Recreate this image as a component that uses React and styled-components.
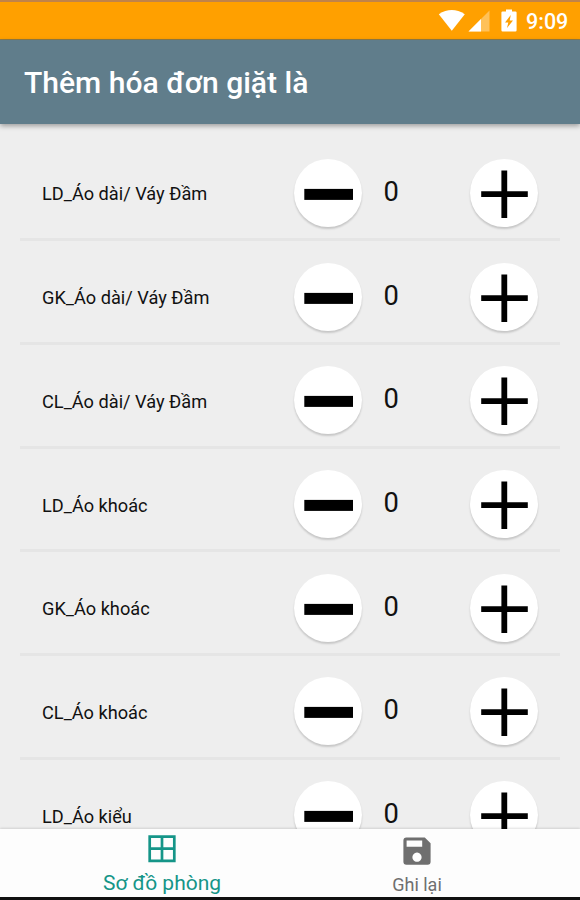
import React from 'react'
import styled, { createGlobalStyle } from 'styled-components'

const items = [
    'LD_Áo dài/ Váy Đầm',
    'GK_Áo dài/ Váy Đầm',
    'CL_Áo dài/ Váy Đầm',
    'LD_Áo khoác',
    'GK_Áo khoác',
    'CL_Áo khoác',
    'LD_Áo kiểu',
];

const MinusIcon = () => (
    <svg width="68" height="68" viewBox="0 0 68 68">
        <rect x="10.3" y="29.9" width="48.7" height="11" fill="#000" />
    </svg>
)

const PlusIcon = () => (
    <svg width="68" height="68" viewBox="0 0 68 68">
        <path d="M11.2 32.2h46.6v5.8h-46.6zM31.4 11.4h5.8v47.6h-5.8z" fill="#000" />
    </svg>
)

const ItemRow = ({ name, count }) => (
    <Row>
        <Label>{name}</Label>
        <RoundButton aria-label="-"><MinusIcon /></RoundButton>
        <Count>{count}</Count>
        <RoundButton aria-label="+"><PlusIcon /></RoundButton>
    </Row>
)

const App = () => {
    return (
        <Screen>
            <GlobalStyle />

            {/* STATUS BAR */}
            <StatusBar>
                <svg width="28" height="22" viewBox="0 0 28 22">
                    <path d="M0.8 4.2Q13.8 -4.2 26.8 4.2L13.8 20.8z" fill="#fff" />
                </svg>
                <svg width="22" height="22" viewBox="0 0 22 22">
                    <path d="M0.5 21.5L21.5 0.5v21z" fill="#fff" opacity="0.35" />
                    <path d="M0.5 21.5L13 9v12.5z" fill="#fff" />
                </svg>
                <BatteryIcon width="16" height="23" viewBox="0 0 16 23">
                    <path d="M1.6 2.4H5V0.4h6v2h3.4q1.2 0 1.2 1.2v17.6q0 1.2-1.2 1.2H1.6q-1.2 0-1.2-1.2V3.6q0-1.2 1.2-1.2z" fill="#fff" />
                    <path d="M9.8 6L4 13.4h3.3L6 19l6-7.6H8.7z" fill="#ffa000" />
                </BatteryIcon>
                <Clock>9:09</Clock>
            </StatusBar>

            {/* TITLE */}
            <Header>
                <Title>Thêm hóa đơn giặt là</Title>
            </Header>

            {/* ITEMS */}
            <List>
                {items.map((name) => (
                    <ItemRow key={name} name={name} count={0} />
                ))}
            </List>

            {/* BOTTOM NAVIGATION */}
            <BottomNav>
                <NavItem $active>
                    <svg width="28" height="28" viewBox="0 0 28 28">
                        <path d="M1.7 1.7h24.6v24.1H1.7zM14 1.7v24.1M1.7 13.7h24.6" fill="none" stroke="currentColor" strokeWidth="2.7" />
                    </svg>
                    <NavLabel $active>Sơ đồ phòng</NavLabel>
                </NavItem>
                <NavItem>
                    <svg width="28" height="28" viewBox="0 0 28 28">
                        <path
                            fillRule="evenodd"
                            d="M3.4 0.5h18.4l5.8 5.8v18.4q0 3-3 3H3.4q-3 0-3-3V3.5q0-3 3-3zM3.6 3.5v6.2h15.6V3.5zM14 15.6a4.6 4.6 0 1 0 0.01 0z"
                            fill="currentColor"
                        />
                    </svg>
                    <NavLabel>Ghi lại</NavLabel>
                </NavItem>
            </BottomNav>
        </Screen>
    )
}

const GlobalStyle = createGlobalStyle`
    body {
        margin: 0;
        font-family: Roboto, 'Liberation Sans', sans-serif;
    }

    * {
        box-sizing: border-box;
    }
`

const Screen = styled.div`
    display: flex;
    flex-direction: column;
    width: 580px;
    height: 900px;
    overflow: hidden;
    background: #eeeeee;
`

const StatusBar = styled.div`
    display: flex;
    align-items: flex-start;
    flex: none;
    height: 40px;
    padding: 8px 0 0 438px;
    border-top: 2px solid #c0834a;
    border-bottom: 1px solid #937d45;
    background: #ffa000;

    svg {
        flex: none;
    }

    svg + svg {
        margin-left: 2px;
    }
`

const BatteryIcon = styled.svg`
    && {
        margin: -1px 0 0 11px;
    }
`

const Clock = styled.span`
    margin-left: 9px;
    color: #fff;
    font-size: 21.5px;
    font-weight: 500;
    line-height: 23px;
`

const Header = styled.header`
    display: flex;
    align-items: center;
    flex: none;
    height: 84px;
    padding: 1px 24px 0;
    background: #607d8b;
    box-shadow: 0 2px 5px rgba(0, 0, 0, 0.35);
`

const Title = styled.h1`
    margin: 0;
    color: #fff;
    font-size: 30.05px;
    font-weight: 500;
    line-height: 40px;
    white-space: nowrap;
`

const List = styled.div`
    flex: 1;
    min-height: 0;
    padding: 13.6px 20px 0;
    overflow: hidden;
`

const Row = styled.div`
    display: grid;
    grid-template-columns: 251.5px 68px 108px 68px;
    align-items: center;
    height: 103.7px;
    padding: 10px 0 0 22px;
    border-bottom: 3px solid #e5e5e5;
`

const Label = styled.span`
    padding-top: 3px;
    color: #111;
    font-size: 18.2px;
    line-height: 24px;
    white-space: nowrap;
`

const RoundButton = styled.button`
    width: 68px;
    height: 68px;
    padding: 0;
    border: 0;
    border-radius: 50%;
    background: #fff;
    box-shadow: 0 2px 2px rgba(0, 0, 0, 0.17);

    svg {
        display: block;
    }
`

const Count = styled.span`
    display: block;
    height: 28px;
    margin-bottom: 2px;
    padding-left: 22px;
    color: #111;
    font-size: 27.3px;
    line-height: 28px;
`

const BottomNav = styled.nav`
    display: flex;
    justify-content: center;
    flex: none;
    height: 71px;
    padding-right: 1px;
    border-bottom: 3px solid #111;
    background: #fdfdfd;
    box-shadow: 0 -1px 2px rgba(0, 0, 0, 0.12);
`

const NavItem = styled.div`
    display: flex;
    flex-direction: column;
    align-items: center;
    width: 255px;
    padding-top: ${({ $active }) => ($active ? '6px' : '8px')};
    color: ${({ $active }) => ($active ? '#159588' : '#6f6f6f')};
`

const NavLabel = styled.span`
    margin-top: ${({ $active }) => ($active ? '8px' : '8px')};
    font-size: ${({ $active }) => ($active ? '21px' : '18px')};
    line-height: 24px;
    white-space: nowrap;
`

export default App
